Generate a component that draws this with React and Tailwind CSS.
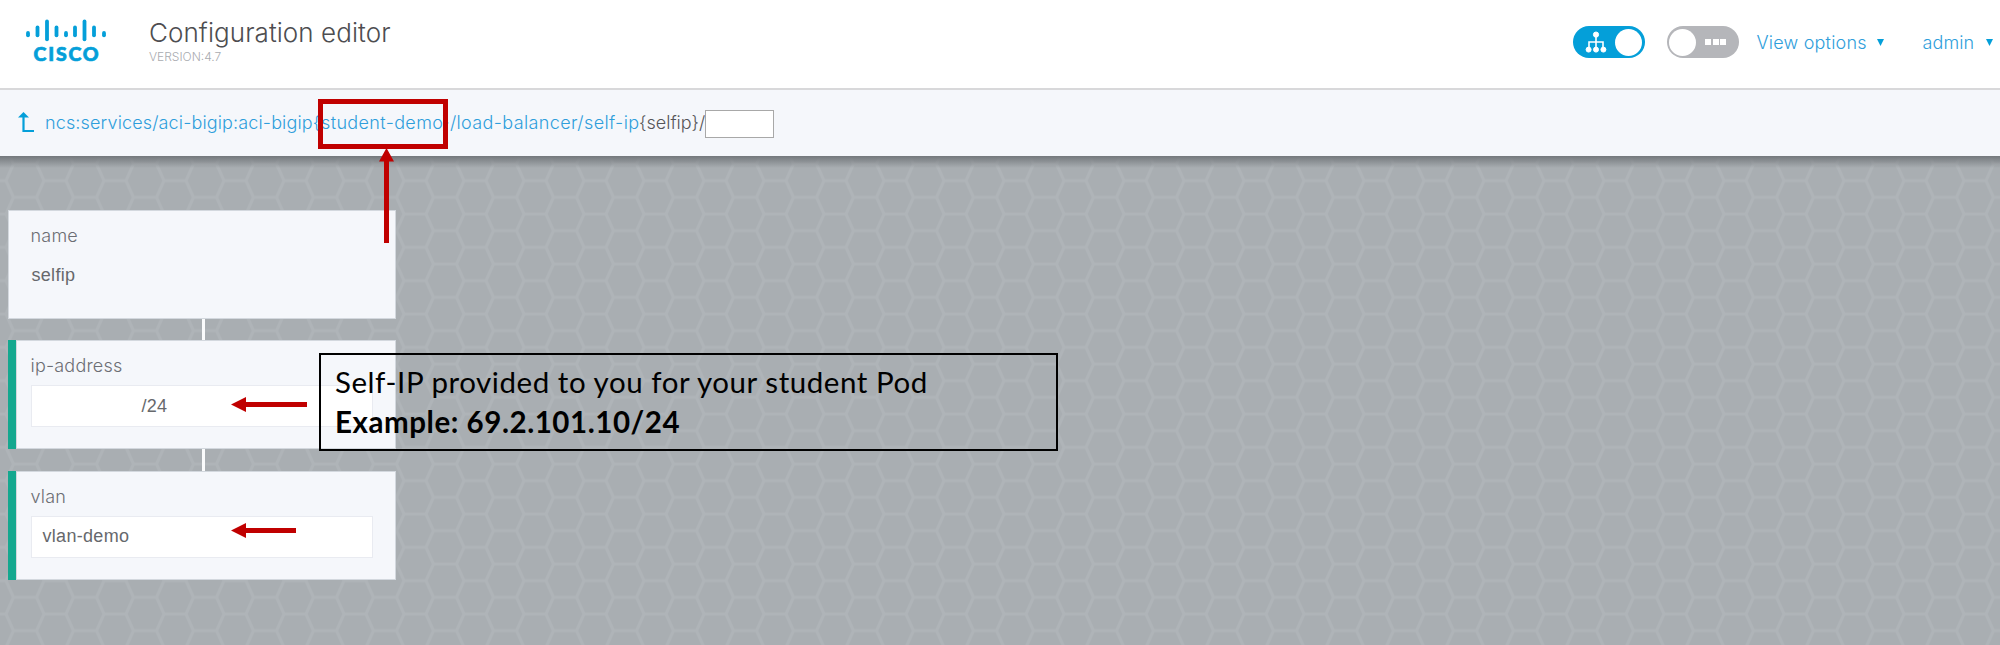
import React from "react";

const logoBars = [
  [28.5, 31, 36.5], [38, 25.5, 36.5], [47.5, 19.5, 40.5], [57, 25.5, 36.5], [66.5, 31, 36.5],
  [75.5, 25.5, 36.5], [85, 19.5, 40.5], [94.5, 25.5, 36.5], [104.5, 31, 36.5],
];

function Logo() {
  return (
    <div className="flex w-[84px] flex-col items-center">
      <svg width="84" height="24" viewBox="24.5 18 84 24" stroke="#049fd9" strokeWidth="3.8" strokeLinecap="round">
        {logoBars.map(([x, a, b]) => (
          <line key={x} x1={x} x2={x} y1={a + 1.9} y2={b - 1.2} />
        ))}
      </svg>
      <span className="mt-[1px] pl-[2px] font-['Lato'] text-[19.5px] leading-[22px] font-black tracking-[1.8px] text-[#049fd9] [-webkit-text-stroke:0.7px_#049fd9]">CISCO</span>
    </div>
  );
}

function TreeIcon() {
  return (
    <svg width="22" height="22" viewBox="0 0 22 22" fill="#fff" stroke="#fff">
      <path d="M11 4v14M4 17v-6h14v6" fill="none" strokeWidth="1.6" />
      <circle cx="11" cy="3.6" r="2.6" />
      <circle cx="3.6" cy="18.6" r="2.5" />
      <circle cx="11" cy="18.6" r="2.5" />
      <circle cx="18.4" cy="18.6" r="2.5" />
    </svg>
  );
}

function Honeycomb() {
  return (
    <svg className="absolute inset-0 h-full w-full">
      <defs>
        <pattern id="comb" width="60" height="33.333" patternUnits="userSpaceOnUse" x="-1" y="24.7">
          <path
            d="M-14.5 16.667L-7 0M-14.5 16.667L-7 33.333M7 0L14.5 16.667L7 33.333M14.5 16.667H37.5M45 0L37.5 16.667L45 33.333M45 0H67M45 33.333H67M-15 0H7M-15 33.333H7M67 0L74.5 16.667"
            fill="none" stroke="#afb4b8" strokeWidth="3"
          />
        </pattern>
      </defs>
      <rect width="100%" height="100%" fill="url(#comb)" />
    </svg>
  );
}

function Card({ label, green, children }) {
  return (
    <div className={"flex h-[109px] w-[388px] " + (green ? "bg-[#14a88f] pl-2" : "")}>
      <div className={"flex-1 border border-[#d3d8de] bg-[#f5f7fb] " + (green ? "pl-[14px]" : "pl-[22px]")}>
        <div className="pt-[12px] font-['Inter'] text-[18px] leading-[26px] font-light tracking-[0.2px] text-[#6c6e74]">{label}</div>
        {children}
      </div>
    </div>
  );
}

const Connector = () => <div className="ml-[194.5px] h-[21.5px] w-[3px] bg-[#fafbfc]" />;

function Field({ children }) {
  return (
    <div className="mt-[6px] flex h-[42px] w-[342px] items-center border border-[#e9ebf1] bg-white font-['Liberation_Sans'] text-[18px] tracking-[0.3px] text-[#66686c]">
      {children}
    </div>
  );
}

function LeftArrow({ length }) {
  return (
    <svg width={length} height="15" viewBox={"0 0 " + length + " 15"} fill="#c00000">
      <path d={"M0 7.5L15 0V5H" + length + "V10H15V15Z"} />
    </svg>
  );
}

export default function App() {
  return (
    <div className="relative flex h-[645px] w-[2000px] flex-col overflow-hidden bg-white font-['Inter','Liberation_Sans',sans-serif]">
      <header className="flex h-[90px] shrink-0 border-b-2 border-[#d8d8da]">
        <div className="pt-[18px] pl-[24px]"><Logo /></div>
        <div className="pt-[17px] pl-[41px]">
          <h1 className="text-[26px] leading-[32px] font-light tracking-[0.07px] whitespace-nowrap text-[#4d4d50]">Configuration editor</h1>
          <div className="text-[12px] leading-[16px] font-light text-[#a9abb0]">VERSION:4.7</div>
        </div>
        <div className="ml-auto flex h-[84px] w-[427px] items-center text-[18px] font-light text-[#2f9edb]">
          <div className="flex h-8 w-[72px] shrink-0 items-center justify-between rounded-full bg-[#049fd9] pr-[3px] pl-[12px]">
            <TreeIcon />
            <span className="h-[27px] w-[27px] rounded-full bg-white" />
          </div>
          <div className="ml-[22px] flex h-8 w-[72px] shrink-0 items-center justify-between rounded-full bg-[#b5b6ba] pr-[13px] pl-[2px]">
            <span className="h-[27px] w-[27px] rounded-full bg-white" />
            <span className="flex gap-[1.5px]">
              <i className="h-[6px] w-[6px] bg-white" /><i className="h-[6px] w-[6px] bg-white" /><i className="h-[6px] w-[6px] bg-white" />
            </span>
          </div>
          <div className="ml-[17.5px] flex w-[166px] shrink-0 items-center">
            <span className="w-[120px] tracking-[0.2px] whitespace-nowrap">View options</span>
            <svg width="7" height="7" viewBox="0 0 7 7" fill="#049fd9"><path d="M0 0H7L3.5 7Z" /></svg>
          </div>
          <div className="flex items-center">
            <span className="w-[63px] tracking-[0.1px]">admin</span>
            <svg width="7" height="7" viewBox="0 0 7 7" fill="#049fd9"><path d="M0 0H7L3.5 7Z" /></svg>
          </div>
        </div>
      </header>

      <nav className="flex h-[66px] shrink-0 items-center bg-[#f5f7fb] pl-[18px] text-[18px] font-light">
        <svg className="mt-[-1px]" width="16" height="21" viewBox="0 0 16 21">
          <path d="M5.5 4V19H16" fill="none" stroke="#049fd9" strokeWidth="2.2" />
          <path d="M0 5.5L5.5 0L11 5.5Z" fill="#049fd9" />
        </svg>
        <div className="mt-[-2px] ml-[11px] flex w-[660px] whitespace-nowrap text-[#2f9edb]">
          <span className="w-[276px] tracking-[0.14px]">ncs:services/aci-bigip:aci-bigip{"{"}</span>
          <span className="w-[121px] tracking-[0.36px]">student-demo</span>
          <span className="w-[197px] tracking-[0.38px]">{"}"}/load-balancer/self-ip</span>
          <span className="w-[66px] text-[#555558]">{"{selfip}/"}</span>
        </div>
        <div className="mt-[2px] h-[28px] w-[69px] border border-[#a8a8a8] bg-white" />
      </nav>

      <main className="relative flex-1 bg-[#a9aeb2]">
        <Honeycomb />
        <div className="absolute inset-x-0 top-0 h-[12px] bg-linear-to-b from-[#74787c] to-[#74787c]/0" />
        <div className="relative flex flex-col pt-[53.5px] pl-[7.5px]">
          <Card label="name">
            <div className="mt-[13px] pl-[1px] font-['Liberation_Sans'] text-[18px] leading-[26px] tracking-[0.3px] text-[#66686c]">
              selfip
            </div>
          </Card>
          <Connector />
          <Card label="ip-address" green>
            <Field><span className="pl-[110px]">/24</span></Field>
          </Card>
          <Connector />
          <Card label="vlan" green>
            <Field><span className="pl-[11px]">vlan-demo</span></Field>
          </Card>
        </div>
      </main>

      <div className="absolute top-[99px] left-[318px] h-[50px] w-[130px] border-[5px] border-[#c00000]" />
      <svg className="absolute top-[148px] left-[379px]" width="15" height="95" viewBox="0 0 15 95" fill="#c00000">
        <path d="M7.5 0L15 13.5H10V95H5V13.5H0Z" />
      </svg>
      <div className="absolute top-[397px] left-[231px]"><LeftArrow length={76} /></div>
      <div className="absolute top-[523px] left-[231px]"><LeftArrow length={65} /></div>
      <div className="absolute top-[353px] left-[319px] h-[98px] w-[739px] border-2 border-black pt-[7px] pl-[14px] font-['Lato'] text-[29.5px] leading-[40px] tracking-[0.55px] whitespace-nowrap text-black">
        <div>Self-IP provided to you for your student Pod</div>
        <div className="font-bold">Example: 69.2.101.10/24</div>
      </div>
    </div>
  );
}
